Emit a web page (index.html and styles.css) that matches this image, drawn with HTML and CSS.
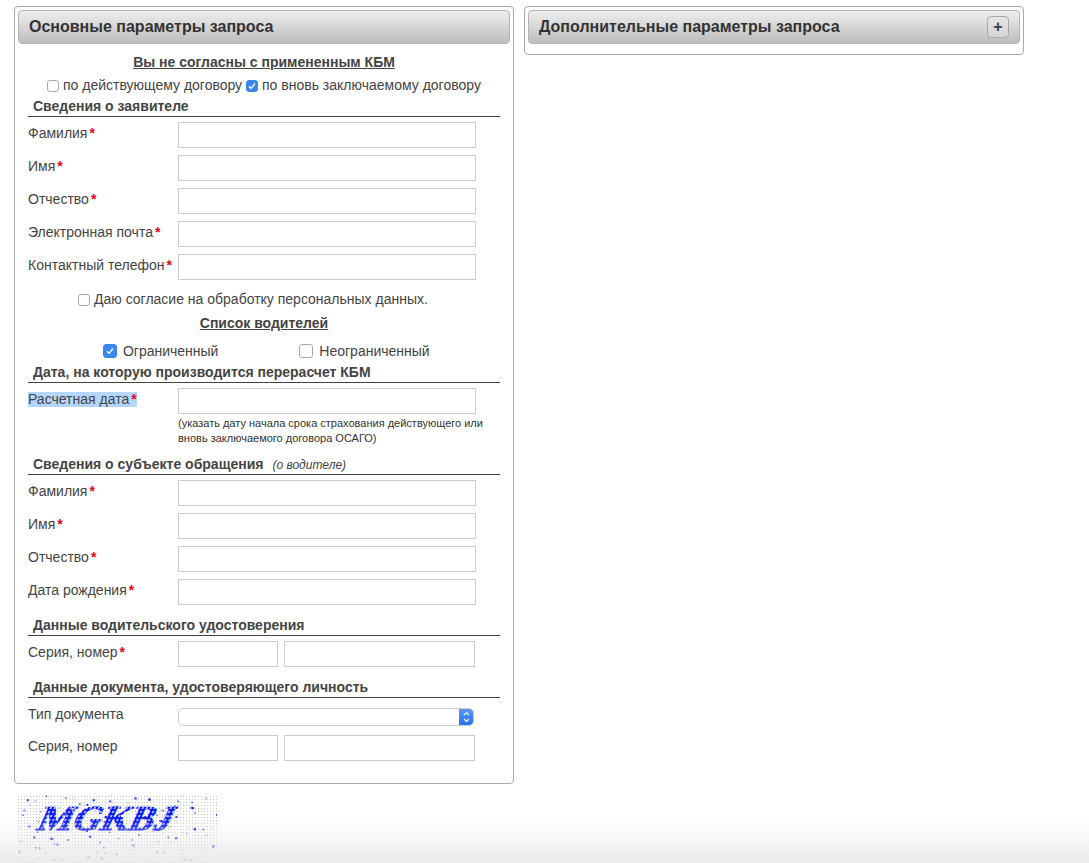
FILE: index.html
```html
<!DOCTYPE html>
<html lang="ru">
<head>
    <meta charset="utf-8">
    <title>Запрос КБМ</title>
    <link rel="stylesheet" href="styles.css">
</head>
<body>
    <div class="panels">
        <div class="panel">
            <div class="panel-head"><h2>Основные параметры запроса</h2></div>
            <form class="panel-body">
                <div class="center-title first">Вы не согласны с примененным КБМ</div>
                <div class="check-line contract">
                    <label><input type="checkbox"> по действующему договору</label>
                    <label><input type="checkbox" checked> по вновь заключаемому договору</label>
                </div>

                <div class="section-title tight">Сведения о заявителе</div>
                <div class="row"><span class="row-label">Фамилия<b>*</b></span><input type="text"></div>
                <div class="row"><span class="row-label">Имя<b>*</b></span><input type="text"></div>
                <div class="row"><span class="row-label">Отчество<b>*</b></span><input type="text"></div>
                <div class="row"><span class="row-label">Электронная почта<b>*</b></span><input type="text"></div>
                <div class="row"><span class="row-label">Контактный телефон<b>*</b></span><input type="text"></div>

                <div class="check-line consent">
                    <label><input type="checkbox"> Даю согласие на обработку персональных данных.</label>
                </div>
                <div class="center-title">Список водителей</div>
                <div class="check-line drivers">
                    <label><input type="checkbox" checked> Ограниченный</label>
                    <label><input type="checkbox"> Неограниченный</label>
                </div>

                <div class="section-title tight">Дата, на которую производится перерасчет КБМ</div>
                <div class="row">
                    <span class="row-label"><span class="selected">Расчетная дата<b>*</b></span></span>
                    <div>
                        <input type="text">
                        <p class="note">(указать дату начала срока страхования действующего или вновь заключаемого договора ОСАГО)</p>
                    </div>
                </div>

                <div class="section-title after-note">Сведения о субъекте обращения <em>(о водителе)</em></div>
                <div class="row"><span class="row-label">Фамилия<b>*</b></span><input type="text"></div>
                <div class="row"><span class="row-label">Имя<b>*</b></span><input type="text"></div>
                <div class="row"><span class="row-label">Отчество<b>*</b></span><input type="text"></div>
                <div class="row"><span class="row-label">Дата рождения<b>*</b></span><input type="text"></div>

                <div class="section-title">Данные водительского удостоверения</div>
                <div class="row">
                    <span class="row-label">Серия, номер<b>*</b></span>
                    <div class="pair"><input type="text"><input type="text"></div>
                </div>

                <div class="section-title">Данные документа, удостоверяющего личность</div>
                <div class="row row-select">
                    <span class="row-label">Тип документа</span>
                    <select><option></option></select>
                </div>
                <div class="row">
                    <span class="row-label">Серия, номер</span>
                    <div class="pair"><input type="text"><input type="text"></div>
                </div>
            </form>
        </div>

        <div class="panel panel-side">
            <div class="panel-head">
                <h2>Дополнительные параметры запроса</h2>
                <button type="button" class="toggle">+</button>
            </div>
        </div>
    </div>

    <div class="captcha">
        <svg id="captchaNoise" width="200" height="68" viewBox="0 0 200 68">
            <defs>
                <pattern id="mesh" width="4" height="4" patternUnits="userSpaceOnUse">
                    <rect width="4" height="4" fill="#0618f5"/>
                    <rect x="1" y="1" width="2" height="2" fill="#c9d0ff"/>
                </pattern>
            </defs>
            <text class="captcha-text" x="0" y="0" transform="translate(18 35) skewX(-24)" fill="url(#mesh)" stroke="url(#mesh)" textLength="134" lengthAdjust="spacingAndGlyphs">MGKBJ</text>
        </svg>
    </div>

    <div class="bottom-fade"></div>
    <script src="captcha.js"></script>
</body>
</html>
```

FILE: styles.css
```css
body {
    margin: 0;
    background: #fff;
    font-family: "Liberation Sans", Arial, sans-serif;
    font-size: 14px;
    color: #444;
}
.panels {
    display: flex;
    align-items: flex-start;
    gap: 10px;
    padding: 6px 0 0 14px;
}
.panel {
    width: 500px;
    box-sizing: border-box;
    padding: 3px;
    border: 1px solid #aaa;
    border-radius: 4px;
}
.panel-side {
    height: 49px;
}
.panel-head {
    display: flex;
    align-items: center;
    justify-content: space-between;
    box-sizing: border-box;
    height: 34px;
    padding: 0 10px;
    border: 1px solid #b5b5b5;
    border-radius: 4px;
    background: linear-gradient(#eee, #bdbdbd);
}
.panel-head h2 {
    margin: 0;
    font-size: 16px;
    color: #333;
}
.toggle {
    width: 22px;
    height: 22px;
    padding: 0;
    border: 1px solid #a8a8a8;
    border-radius: 4px;
    background: linear-gradient(#e6e6e6, #d4d4d4);
    font: bold 16px/18px "Liberation Sans", Arial, sans-serif;
    color: #3a3f4a;
}
.panel-body {
    padding: 0 10px 19px;
}
.center-title {
    margin-top: 4px;
    font-weight: bold;
    line-height: 20px;
    text-align: center;
    text-decoration: underline;
}
.center-title.first {
    margin-top: 8px;
}
.check-line {
    display: flex;
    justify-content: center;
    gap: 4px;
    line-height: 20px;
}
.check-line.contract {
    margin-top: 3px;
}
.check-line.consent {
    margin-top: 9px;
    padding-right: 22px;
}
.check-line.drivers {
    justify-content: flex-start;
    gap: 81px;
    margin-top: 8px;
    padding-left: 75px;
}
.check-line input {
    appearance: none;
    width: 12px;
    height: 12px;
    margin: 0;
    vertical-align: -2px;
    border: 1px solid #aaa;
    border-radius: 3px;
    background: #fff;
}
.check-line input:checked {
    border-color: #3b87ee;
    background: #3b87ee url("data:image/svg+xml,%3Csvg xmlns='http://www.w3.org/2000/svg' viewBox='0 0 12 12'%3E%3Cpath d='M3 6.3l2 2.2 4-5' fill='none' stroke='%23fff' stroke-width='1.3'/%3E%3C/svg%3E") center / 12px no-repeat;
}
.check-line.drivers input {
    width: 14px;
    height: 14px;
    margin-right: 2px;
}
.section-title {
    margin-top: 10px;
    padding-left: 5px;
    border-bottom: 1px solid #444;
    font-weight: bold;
    line-height: 20px;
}
.section-title.tight {
    margin-top: 1px;
}
.section-title.after-note {
    margin-top: 8px;
}
.section-title em {
    margin-left: 5px;
    font-size: 12px;
    font-weight: normal;
    line-height: 1;
}
.row {
    display: grid;
    grid-template-columns: 150px 298px;
    margin-top: 7px;
}
.section-title + .row {
    margin-top: 5px;
}
.row-label {
    line-height: 22px;
}
.row-label b {
    margin-left: 2px;
    color: #ee0014;
}
.selected {
    display: inline-block;
    line-height: 15px;
    background: #b4d5fe;
}
.row input[type="text"] {
    display: block;
    box-sizing: border-box;
    width: 298px;
    height: 26px;
    border: 1px solid #ccc;
    background: #fff;
}
.pair {
    display: flex;
    gap: 6px;
}
.row .pair input[type="text"] {
    width: 100px;
}
.row .pair input[type="text"]:last-child {
    width: 191px;
}
.note {
    width: 310px;
    margin: 2px 0 0;
    font-size: 11px;
    line-height: 15px;
    color: #333;
}
.section-title + .row-select {
    margin-top: 10px;
}
.row-select + .row {
    margin-top: 9px;
}
.row-select .row-label {
    line-height: 12px;
}
.row-select select {
    appearance: none;
    box-sizing: border-box;
    width: 296px;
    height: 18px;
    padding: 0;
    border: 1px solid #ccc;
    border-radius: 5px;
    background: #fff url("data:image/svg+xml,%3Csvg xmlns='http://www.w3.org/2000/svg' viewBox='0 0 15 18'%3E%3Cdefs%3E%3ClinearGradient id='b' x2='0' y2='1'%3E%3Cstop stop-color='%235a9df5'/%3E%3Cstop offset='1' stop-color='%23256ff0'/%3E%3C/linearGradient%3E%3C/defs%3E%3Cpath d='M0 0h10a5 5 0 0 1 5 5v8a5 5 0 0 1-5 5H0z' fill='url(%23b)'/%3E%3Cpath d='M5 7l2.5-2.5L10 7M5 11l2.5 2.5L10 11' fill='none' stroke='%23fff' stroke-width='1.2'/%3E%3C/svg%3E") right -1px center / 15px 18px no-repeat;
}
.captcha {
    width: 200px;
    height: 68px;
    margin: 11px 0 0 17px;
    background: radial-gradient(circle, #c9c9d2 0.6px, transparent 1px) 0 0 / 3px 3px;
}
.captcha svg {
    display: block;
}
.captcha-text {
    font-family: "Liberation Serif", serif;
    font-size: 35px;
    font-weight: bold;
    stroke-width: 0.8;
}
.bottom-fade {
    position: fixed;
    left: 0;
    right: 0;
    bottom: 0;
    height: 43px;
    background: linear-gradient(rgba(234, 234, 234, 0), rgba(234, 234, 234, 0.95));
    pointer-events: none;
}
```

FILE: captcha.js
```js
// Scatter the noise specks over the captcha picture
const noise = document.getElementById('captchaNoise');
const colors = ['#1a2cf0', '#1a2cf0', '#5a62f0', '#a4a6f4', '#cfc4f0'];
let seed = 17;

function next(max) {
    seed = (seed * 1103 + 12345) % 65536;
    return (seed / 65536) * max;
}

for (let i = 0; i < 130; i++) {
    const speck = document.createElementNS('http://www.w3.org/2000/svg', 'rect');
    const size = 1 + next(1.5);
    speck.setAttribute('x', next(200));
    speck.setAttribute('y', next(68));
    speck.setAttribute('width', size);
    speck.setAttribute('height', size);
    speck.setAttribute('fill', colors[Math.floor(next(5))]);
    noise.appendChild(speck);
}
```
